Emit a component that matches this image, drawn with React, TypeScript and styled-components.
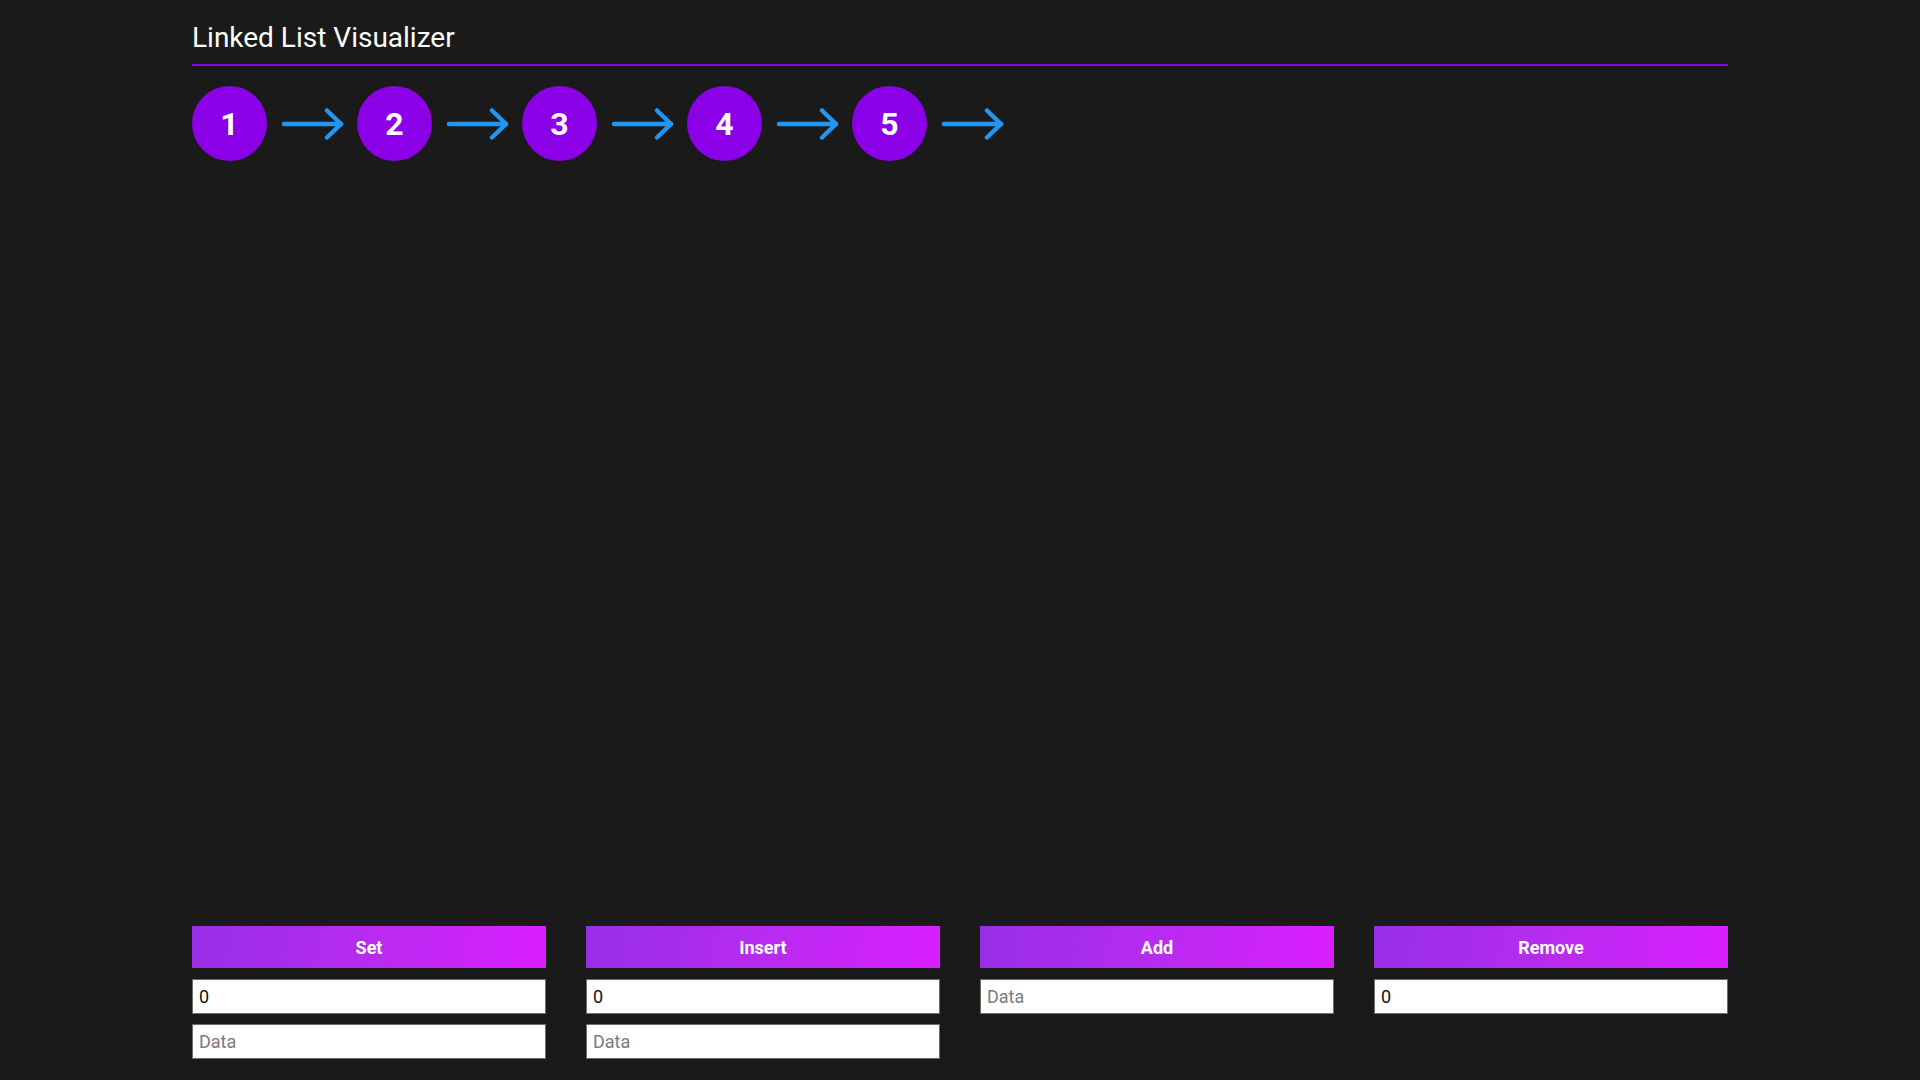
import React from "react";
import styled, { createGlobalStyle } from "styled-components";

const Global = createGlobalStyle`
  html, body { margin: 0; padding: 0; background: #1a1a1a; }
  body { font-family: Roboto, "Liberation Sans", sans-serif; color: #fff; }
  * { box-sizing: border-box; }
`;

const Page = styled.div`
  min-height: 100vh;
  display: flex;
  flex-direction: column;
  width: 1536px;
  margin: 0 auto;
  padding-bottom: 21px;
`;

const Header = styled.header`
  padding-top: 21px;
  padding-bottom: 10px;
  border-bottom: 2px solid #8b00e6;
`;

const Title = styled.h1`
  margin: 0;
  font-size: 28px;
  font-weight: 400;
  line-height: 33px;
  color: #fff;
`;

const ListRow = styled.div`
  display: flex;
  align-items: center;
  margin-top: 20px;
`;

const Node = styled.div`
  width: 75px;
  height: 75px;
  border-radius: 50%;
  background: #8b00e6;
  color: #fff;
  display: flex;
  align-items: center;
  justify-content: center;
  font-size: 32px;
  font-weight: 700;
`;

const ArrowWrap = styled.div`
  width: 90px;
  height: 75px;
  display: flex;
  align-items: center;
  padding-left: 14px;
`;

const Controls = styled.div`
  margin-top: auto;
  display: grid;
  grid-template-columns: repeat(4, 1fr);
  column-gap: 40px;
  align-items: start;
`;

const Column = styled.div`
  display: flex;
  flex-direction: column;
  gap: 10.5px;
`;

const ActionButton = styled.button`
  height: 42px;
  border: none;
  background: linear-gradient(100deg, #962fe6 0%, #b82bf0 50%, #db1fff 100%);
  color: #fff;
  font-family: Roboto, "Liberation Sans", sans-serif;
  font-size: 18px;
  font-weight: 700;
  cursor: pointer;
  padding: 0;
`;

const Field = styled.input`
  height: 35px;
  border: 1px solid #6b6b6b;
  background: #fff;
  color: #111;
  font-family: Roboto, "Liberation Sans", sans-serif;
  font-size: 18px;
  padding: 0 6px;
  outline: none;
  &::placeholder { color: #7b7b7b; }
`;

const Arrow = () => (
  <svg width="64" height="32" viewBox="0 0 64 32" fill="none">
    <path d="M3 16 H60" stroke="#2196f3" strokeWidth="4.5" strokeLinecap="round" />
    <path d="M46 2.5 L60 16 L46 29.5" stroke="#2196f3" strokeWidth="4.5" strokeLinecap="round" strokeLinejoin="round" />
  </svg>
);

const nodes = [1, 2, 3, 4, 5];

export default function App() {
  return (
    <>
      <Global />
      <Page>
        <Header>
          <Title>Linked List Visualizer</Title>
        </Header>
        <ListRow>
          {nodes.map((n) => (
            <React.Fragment key={n}>
              <Node>{n}</Node>
              <ArrowWrap>
                <Arrow />
              </ArrowWrap>
            </React.Fragment>
          ))}
        </ListRow>
        <Controls>
          <Column>
            <ActionButton>Set</ActionButton>
            <Field defaultValue="0" />
            <Field placeholder="Data" />
          </Column>
          <Column>
            <ActionButton>Insert</ActionButton>
            <Field defaultValue="0" />
            <Field placeholder="Data" />
          </Column>
          <Column>
            <ActionButton>Add</ActionButton>
            <Field placeholder="Data" />
          </Column>
          <Column>
            <ActionButton>Remove</ActionButton>
            <Field defaultValue="0" />
          </Column>
        </Controls>
      </Page>
    </>
  );
}
